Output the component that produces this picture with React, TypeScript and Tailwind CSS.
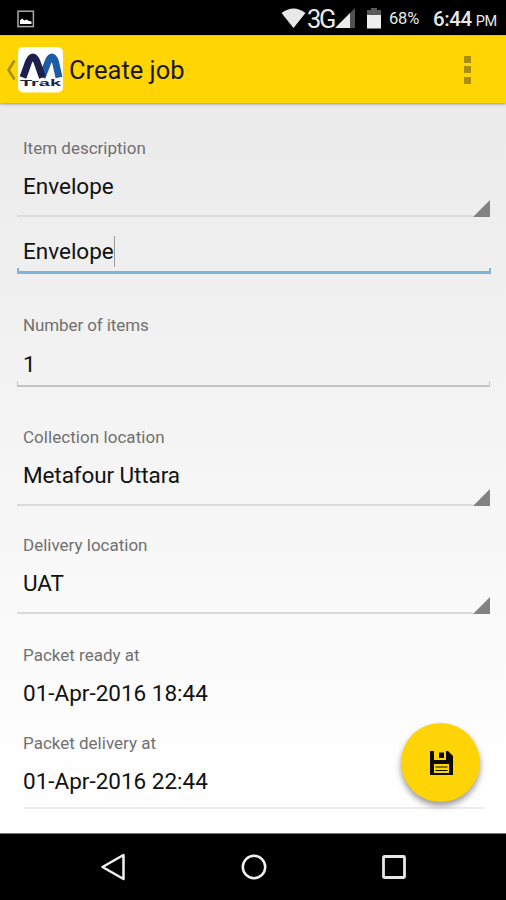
import type { ReactNode } from "react";

function Label({ children, className = "" }: { children: ReactNode; className?: string }) {
  return (
    <div className={`h-5 whitespace-nowrap pl-[6px] text-[17px] leading-5 text-[#707070] ${className}`}>{children}</div>
  );
}

function Value({ children, className = "" }: { children: ReactNode; className?: string }) {
  return (
    <div className={`flex h-7 items-center whitespace-nowrap pl-[6px] text-[22.5px] leading-7 text-[#111] ${className}`}>
      {children}
    </div>
  );
}

/* Spinner underline with the corner triangle at its right end */
function SpinnerLine() {
  return (
    <div className="flex h-[17px] items-end">
      <div className="h-[2px] flex-1 bg-[#dadada]" />
      <svg className="h-[17px] w-[17px]" viewBox="0 0 17 17">
        <path d="M17 0V17H0Z" fill="#828282" />
      </svg>
    </div>
  );
}

function StatusBar() {
  return (
    <div className="flex h-[35px] shrink-0 items-center bg-black pt-[2px] text-[#e8e8e8]">
      <svg className="ml-[17px] h-[18px] w-[18px]" viewBox="0 0 18 18">
        <rect x="1" y="1.2" width="15.4" height="15.4" fill="none" stroke="#aaa" strokeWidth="1.5" />
        <path d="M3 14V10.5L5 8.5L7.5 10.5L9.5 9.5L12 11L14.5 11.5V14Z" fill="#fff" />
      </svg>
      <svg className="ml-[246px] h-[21px] w-[25px] shrink-0" viewBox="0 0 25 21">
        <path d="M0.5 5Q12.5-4.2 24.5 5L12.5 20Z" fill="#e8e8e8" />
      </svg>
      <span className="ml-[1px] mt-[2px] w-[28px] text-[25.5px] leading-none tracking-[-2.4px]">3G</span>
      <svg className="h-[21px] w-[21px] shrink-0" viewBox="0 0 21 21">
        <path d="M20 0V20H15V5Z" fill="#505050" />
        <path d="M15 5V20H0Z" fill="#ececec" />
      </svg>
      <svg className="ml-[11px] h-[21px] w-[15px] shrink-0" viewBox="0 0 15 21">
        <path d="M0 2H4V0H10V2H14V7H0Z" fill="#5a5a5a" />
        <path d="M0 7H14V20.5H0Z" fill="#eee" />
      </svg>
      <span className="ml-[7px] mt-[2px] w-[44px] text-[16.5px] leading-none tracking-[-0.2px]">68%</span>
      <span className="mt-[2px] whitespace-nowrap text-[20.5px] font-medium leading-none tracking-[-0.4px]">
        6:44<span className="ml-[4px] text-[14.5px] font-normal tracking-[-0.5px]">PM</span>
      </span>
    </div>
  );
}

function AppBar() {
  return (
    <div className="z-10 flex h-[68px] shrink-0 items-center border-t border-[#eac300] bg-[#ffd503] shadow-[0_1px_3px_rgba(0,0,0,0.4)]">
      <svg className="ml-[6px] h-[22px] w-[10px]" viewBox="0 0 10 22">
        <path d="M8.5 1.5L2.5 11L8.5 20.5" fill="none" stroke="#a88e13" strokeWidth="2.6" />
      </svg>
      <svg className="ml-[2px] h-[46px] w-[45px] shrink-0" viewBox="0 0 45 46">
        <rect width="45" height="45.5" rx="5" fill="#fff" />
        <path d="M24 30.500L30 15Q34 5 37.500 15L41 30.500" fill="none" stroke="#1d5ca5" strokeWidth="7" />
        <path d="M5 30.500L10.500 15Q15 5 19 15L24.500 30.500" fill="none" stroke="#1c1f4e" strokeWidth="7" />
        <text x="2" y="39" textLength="41" lengthAdjust="spacingAndGlyphs" fontFamily="Liberation Sans, sans-serif" fontSize="9" fontWeight="700" fill="#20213d">
          Trak
        </text>
      </svg>
      <h1 className="ml-[6px] flex-1 text-[25.5px] leading-8 text-[#1c1a10]">Create job</h1>
      <div className="mr-[35px] flex flex-col gap-[3.500px]">
        <i className="h-[7px] w-[7px] bg-[#a88e13]" />
        <i className="h-[7px] w-[7px] bg-[#a88e13]" />
        <i className="h-[7px] w-[7px] bg-[#a88e13]" />
      </div>
    </div>
  );
}

function NavBar() {
  return (
    <div className="flex h-[67px] shrink-0 items-center justify-between border-t border-[#777] bg-black pl-[100px] pr-[99px]">
      <svg className="h-[28px] w-[26px]" viewBox="0 0 26 28">
        <path d="M23.500 2V26L2.500 14Z" fill="none" stroke="#f2f2f2" strokeWidth="2.5" strokeLinejoin="round" />
      </svg>
      <svg className="h-[26px] w-[26px]" viewBox="0 0 26 26">
        <circle cx="13" cy="13" r="11.2" fill="none" stroke="#f2f2f2" strokeWidth="2.5" />
      </svg>
      <svg className="h-[26px] w-[26px]" viewBox="0 0 26 26">
        <rect x="2.500" y="2.500" width="21" height="21" rx="1" fill="none" stroke="#e8e8e8" strokeWidth="2.8" />
      </svg>
    </div>
  );
}

export default function App() {
  return (
    <div className="flex h-[900px] w-[506px] flex-col overflow-hidden bg-black font-['Roboto',sans-serif]">
      <StatusBar />
      <AppBar />
      <main className="relative flex h-[730px] shrink-0 flex-col bg-linear-to-b from-[#ebebeb] via-[#f3f3f3] via-40% to-white to-95% pl-[17px] pr-4 pt-[35px]">
        <Label>Item description</Label>
        <Value className="mt-[14px]">Envelope</Value>
        <SpinnerLine />

        <Value className="mt-[20px]">
          Envelope
          <span className="h-[31px] w-px shrink-0 bg-[#999]" />
        </Value>
        <div className="-mx-[0.5px] mt-[3px] h-[6px] border-x-2 border-b-[3px] border-[#80b4d8]" />

        <Label className="mt-[41px] tracking-[-0.1px]">Number of items</Label>
        <Value className="mt-[15px]">1</Value>
        <div className="mt-[3px] h-[6px] border-x border-b-2 border-[#c4c4c4]" />

        <Label className="mt-[40px] tracking-[0.05px]">Collection location</Label>
        <Value className="mt-[14px] tracking-[-0.1px]">Metafour Uttara</Value>
        <SpinnerLine />

        <Label className="mt-[29px]">Delivery location</Label>
        <Value className="mt-[14px]">UAT</Value>
        <SpinnerLine />

        <Label className="mt-[31px]">Packet ready at</Label>
        <Value className="mt-[14px]">01-Apr-2016 18:44</Value>

        <Label className="mt-[26px]">Packet delivery at</Label>
        <Value className="mt-[14px]">01-Apr-2016 22:44</Value>
        <div className="ml-[7px] mr-[6px] mt-[12px] h-[2px] bg-[#ececec]" />

        <button className="absolute right-[26px] bottom-[31px] flex h-[79px] w-[79px] items-center justify-center rounded-full bg-[#ffd407] shadow-[0_4px_6px_rgba(0,0,0,0.4)]">
          <svg className="h-6 w-6" viewBox="0 0 24 24">
            <path d="M1 0H19L24 5V24H1Z" fill="#0b0b00" />
            <path d="M5 0H17V9H5Z" fill="#ffd407" />
            <path d="M10 1.500H15V7H10Z" fill="#0b0b00" />
            <path d="M5 13H20V22H5Z" fill="#ffd407" />
            <path d="M6.500 16H18.500M6.500 19.500H18.500" stroke="#0b0b00" strokeWidth="1.200" />
          </svg>
        </button>
      </main>
      <NavBar />
    </div>
  );
}
